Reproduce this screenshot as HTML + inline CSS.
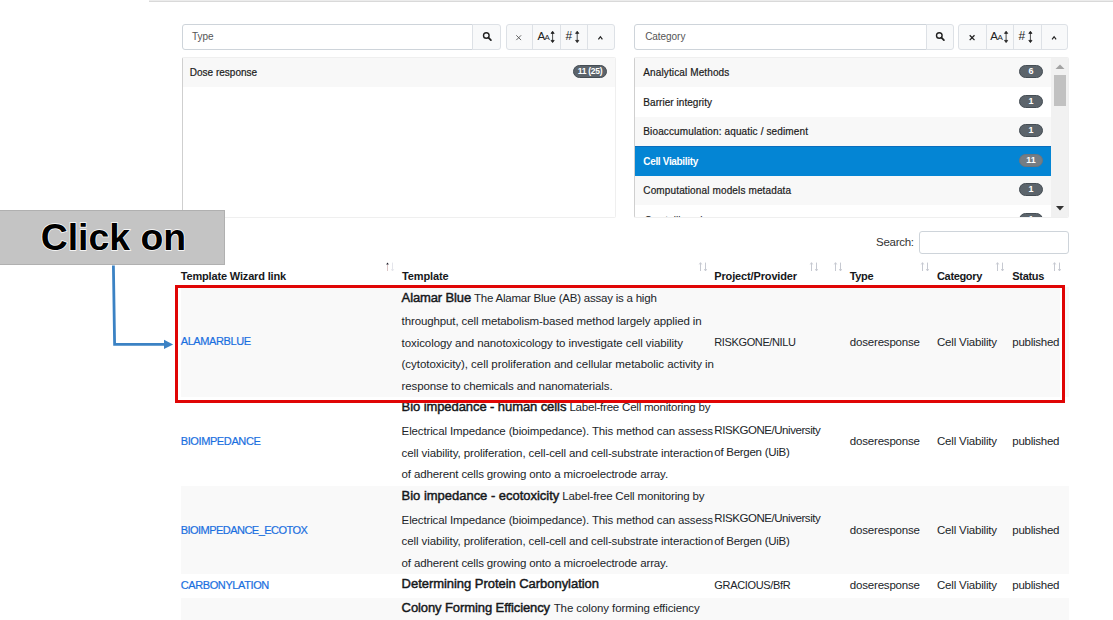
<!DOCTYPE html>
<html><head><meta charset="utf-8">
<style>
html,body{margin:0;padding:0;}
body{width:1113px;height:620px;overflow:hidden;background:#fff;position:relative;font-family:"Liberation Sans",sans-serif;color:#212529;}
.abs{position:absolute;}
.topline{left:149px;top:0;width:964px;height:2px;background:linear-gradient(#ececec 0,#ececec 50%,#d9d9d9 50%,#d9d9d9 100%);}
.inp{border:1px solid #ced4da;border-radius:3px;background:#fff;box-sizing:border-box;height:26px;top:24px;}
.btn{box-sizing:border-box;border:1px solid #dde1e6;background:#f8f9fa;height:26px;top:24px;}
.btn i{position:absolute;top:0;bottom:0;width:1px;background:#dde1e6;}
.list{box-sizing:border-box;border:1px solid #efefef;border-left-color:#cfcfcf;border-radius:2px;background:#fff;top:57px;height:161px;overflow:hidden;}
.li{position:absolute;left:0;right:0;height:30px;}
.li.odd{background:#f8f8f8;}
.li.sel{background:#0485d4;}
.bdg{position:absolute;background:#5c646b;border:1px solid #454d54;box-sizing:border-box;color:#fff;font-weight:bold;font-size:9px;border-radius:7px;height:13px;line-height:11px;text-align:center;}
.tx{position:absolute;white-space:pre;line-height:0;height:0;}
.row{position:absolute;left:180px;width:889px;}
.g{background:#f9f9f9;}
.srt{position:absolute;font-size:9px;line-height:9px;color:#c8c8c8;letter-spacing:-1.5px;white-space:nowrap;}
.srt b{font-weight:normal;color:#c8c8c8;}
.srt.a b{color:#555;}
</style></head><body>
<div class="abs topline"></div>

<!-- Type filter -->
<div class="abs inp" style="left:182px;width:291px;border-radius:3px 0 0 3px;"></div>
<div class="abs btn" style="left:472px;width:29px;border-radius:0 3px 3px 0;"></div>
<div class="abs btn" style="left:506px;width:109px;border-radius:3px;"><i style="left:25px"></i><i style="left:52.5px"></i><i style="left:80px"></i></div>
<div class="abs list" style="left:182px;width:434px;">
  <div class="li odd" style="top:0;height:29px"></div>
</div>
<div class="bdg" style="left:573px;top:64.5px;width:34px;font-size:8.5px;letter-spacing:-0.3px">11 (25)</div>

<!-- Category filter -->
<div class="abs inp" style="left:634px;width:293px;border-radius:3px 0 0 3px;"></div>
<div class="abs btn" style="left:926px;width:28px;border-radius:0 3px 3px 0;"></div>
<div class="abs btn" style="left:958px;width:110px;border-radius:3px;"><i style="left:27px"></i><i style="left:54px"></i><i style="left:82px"></i></div>
<div class="abs list" style="left:634px;width:435px;">
  <div class="li odd" style="top:0;height:29px"></div>
  <div class="li" style="top:29px;"></div>
  <div class="li odd" style="top:59px;height:30px"></div>
  <div class="li sel" style="top:88px;height:30.5px;box-sizing:border-box;border-top:1px solid #0a6ebd;border-bottom:1px solid #0a6ebd"></div>
  <div class="li odd" style="top:118px;height:29px"></div>
  <div class="abs" style="left:416px;top:0;width:18px;height:161px;background:#f1f1f1;"></div>
  <div class="abs" style="left:419px;top:17px;width:12px;height:31px;background:#c1c1c1;"></div>
</div>
<div class="bdg" style="left:1019px;top:65px;width:24px;">6</div>
<div class="bdg" style="left:1019px;top:95px;width:24px;">1</div>
<div class="bdg" style="left:1019px;top:124px;width:24px;">1</div>
<div class="bdg" style="left:1019px;top:154px;width:24px;background:#757d84;border-color:#6c757d;">11</div>
<div class="bdg" style="left:1019px;top:183px;width:24px;">1</div>
<div class="abs" style="left:1019px;top:213px;width:24px;height:4px;overflow:hidden;"><div class="bdg" style="left:0;top:0;width:24px;">1</div></div>
<svg class="abs" style="left:1051px;top:57px" width="18" height="161" viewBox="0 0 18 161">
  <path d="M4.5 12 L9 7.5 L13.5 12 Z" fill="#a3a3a3"/>
  <path d="M5 149 L13 149 L9 153.5 Z" fill="#333"/>
</svg>

<svg class="abs" style="left:506px;top:24px" width="110" height="26" viewBox="0 0 110 26" font-family="Liberation Sans, sans-serif">
  <path d="M10.3 11.3 l4.8 4.8 M15.1 11.3 l-4.8 4.8" stroke="#555" stroke-width="0.9" fill="none"/>
  <text x="31.4" y="16" font-size="11.5" fill="#222" letter-spacing="-0.8">A</text><text x="38.6" y="16" font-size="8" fill="#222">A</text>
  <path d="M46.6 9 v8 M46.6 7.2 l-1.6 2.2 h3.2 z M46.6 18.6 l-1.6 -2.2 h3.2 z" stroke="#222" stroke-width="0.8" fill="#222"/>
  <text x="59.6" y="16" font-size="12" fill="#222">#</text>
  <path d="M71.2 9 v8 M71.2 7.2 l-1.6 2.2 h3.2 z M71.2 18.6 l-1.6 -2.2 h3.2 z" stroke="#222" stroke-width="0.8" fill="#222"/>
  <path d="M92.4 15.4 l2 -2.7 l2 2.7" stroke="#222" stroke-width="1.2" fill="none"/>
</svg>
<svg class="abs" style="left:473px;top:24px" width="28" height="26" viewBox="0 0 28 26">
  <circle cx="13.3" cy="11.5" r="2.8" fill="none" stroke="#222" stroke-width="1.4"/>
  <path d="M15.4 13.6 L17.9 16.1" stroke="#222" stroke-width="1.8" stroke-linecap="round"/>
</svg>
<svg class="abs" style="left:958px;top:24px" width="110" height="26" viewBox="0 0 110 26" font-family="Liberation Sans, sans-serif">
  <path d="M11.7 11.3 l4.8 4.8 M16.5 11.3 l-4.8 4.8" stroke="#222" stroke-width="1.3" fill="none"/>
  <text x="32.2" y="16" font-size="11.5" fill="#222" letter-spacing="-0.8">A</text><text x="39.6" y="16" font-size="8" fill="#222">A</text>
  <path d="M48.1 9 v8 M48.1 7.2 l-1.6 2.2 h3.2 z M48.1 18.6 l-1.6 -2.2 h3.2 z" stroke="#222" stroke-width="0.8" fill="#222"/>
  <text x="60.5" y="16" font-size="12" fill="#222">#</text>
  <path d="M72.4 9 v8 M72.4 7.2 l-1.6 2.2 h3.2 z M72.4 18.6 l-1.6 -2.2 h3.2 z" stroke="#222" stroke-width="0.8" fill="#222"/>
  <path d="M94.1 15.4 l2 -2.7 l2 2.7" stroke="#222" stroke-width="1.2" fill="none"/>
</svg>
<svg class="abs" style="left:926px;top:24px" width="28" height="26" viewBox="0 0 28 26">
  <circle cx="13.3" cy="11.5" r="2.8" fill="none" stroke="#222" stroke-width="1.4"/>
  <path d="M15.4 13.6 L17.9 16.1" stroke="#222" stroke-width="1.8" stroke-linecap="round"/>
</svg>
<!-- search box -->
<div class="abs" style="left:919px;top:231px;width:150px;height:23px;box-sizing:border-box;border:1px solid #ced4da;border-radius:3px;background:#fff;"></div>

<!-- rows -->
<div class="row g" style="top:287px;height:109.6px;left:181px;width:888px"></div>
<div class="abs" style="left:1060.3px;top:288px;width:2px;height:112px;background:#fff"></div>
<div class="row g" style="top:486.2px;height:87.6px;left:181px;width:888px"></div>
<div class="row g" style="top:597.6px;height:23px;left:181px;width:888px"></div>

<div class="tx" style="left:180.7px;top:276.25px;font-size:11px;font-weight:bold;color:#16181b;letter-spacing:-0.158px">Template Wizard link</div>
<div class="tx" style="left:402.0px;top:276.25px;font-size:11px;font-weight:bold;color:#16181b;letter-spacing:-0.126px">Template</div>
<div class="tx" style="left:714.3px;top:276.25px;font-size:11px;font-weight:bold;color:#16181b;letter-spacing:-0.146px">Project/Provider</div>
<div class="tx" style="left:849.8px;top:276.25px;font-size:11px;font-weight:bold;color:#16181b;letter-spacing:-0.353px">Type</div>
<div class="tx" style="left:937.0px;top:276.25px;font-size:11px;font-weight:bold;color:#16181b;letter-spacing:-0.341px">Category</div>
<div class="tx" style="left:1012.3px;top:276.25px;font-size:11px;font-weight:bold;color:#16181b;letter-spacing:-0.325px">Status</div>
<div class="tx" style="left:876.1px;top:242.25px;font-size:11.5px;font-weight:normal;color:#333;letter-spacing:-0.290px">Search:</div>
<div class="tx" style="left:401.6px;top:298.25px;font-size:13px;font-weight:normal;-webkit-text-stroke:0.45px #16181b;color:#16181b;letter-spacing:-0.121px">Alamar Blue</div>
<div class="tx" style="left:474.0px;top:298.25px;font-size:11.5px;font-weight:normal;color:#212529;letter-spacing:-0.220px">The Alamar Blue (AB) assay is a high</div>
<div class="tx" style="left:401.6px;top:321.25px;font-size:11.5px;font-weight:normal;color:#212529;letter-spacing:-0.118px">throughput, cell metabolism-based method largely applied in</div>
<div class="tx" style="left:401.6px;top:343.25px;font-size:11.5px;font-weight:normal;color:#212529;letter-spacing:-0.077px">toxicology and nanotoxicology to investigate cell viability</div>
<div class="tx" style="left:401.6px;top:364.25px;font-size:11.5px;font-weight:normal;color:#212529;letter-spacing:-0.049px">(cytotoxicity), cell proliferation and cellular metabolic activity in</div>
<div class="tx" style="left:401.6px;top:386.25px;font-size:11.5px;font-weight:normal;color:#212529;letter-spacing:-0.114px">response to chemicals and nanomaterials.</div>
<div class="tx" style="left:180.7px;top:341.25px;font-size:11px;font-weight:normal;-webkit-text-stroke:0.2px #1a6fe0;color:#1a6fe0;letter-spacing:-0.387px">ALAMARBLUE</div>
<div class="tx" style="left:714.3px;top:342.26px;font-size:11px;font-weight:normal;color:#212529;letter-spacing:-0.374px">RISKGONE/NILU</div>
<div class="tx" style="left:849.8px;top:342.26px;font-size:11.5px;font-weight:normal;color:#212529;letter-spacing:-0.186px">doseresponse</div>
<div class="tx" style="left:937.0px;top:342.26px;font-size:11.5px;font-weight:normal;color:#212529;letter-spacing:-0.180px">Cell Viability</div>
<div class="tx" style="left:1012.3px;top:342.26px;font-size:11.5px;font-weight:normal;color:#212529;letter-spacing:-0.254px">published</div>
<div class="tx" style="left:401.6px;top:407.26px;font-size:13px;font-weight:normal;-webkit-text-stroke:0.45px #16181b;color:#16181b;letter-spacing:-0.082px">Bio impedance - human cells</div>
<div class="tx" style="left:569.4px;top:407.25px;font-size:11.5px;font-weight:normal;color:#212529;letter-spacing:-0.212px">Label-free Cell monitoring by</div>
<div class="tx" style="left:401.6px;top:431.25px;font-size:11.5px;font-weight:normal;color:#212529;letter-spacing:-0.136px">Electrical Impedance (bioimpedance). This method can assess</div>
<div class="tx" style="left:401.6px;top:453.26px;font-size:11.5px;font-weight:normal;color:#212529;letter-spacing:-0.103px">cell viability, proliferation, cell-cell and cell-substrate interaction</div>
<div class="tx" style="left:401.6px;top:474.25px;font-size:11.5px;font-weight:normal;color:#212529;letter-spacing:-0.130px">of adherent cells growing onto a microelectrode array.</div>
<div class="tx" style="left:401.6px;top:496.25px;font-size:13px;font-weight:normal;-webkit-text-stroke:0.45px #16181b;color:#16181b;letter-spacing:-0.021px">Bio impedance - ecotoxicity</div>
<div class="tx" style="left:562.3px;top:496.26px;font-size:11.5px;font-weight:normal;color:#212529;letter-spacing:-0.173px">Label-free Cell monitoring by</div>
<div class="tx" style="left:401.6px;top:520.25px;font-size:11.5px;font-weight:normal;color:#212529;letter-spacing:-0.136px">Electrical Impedance (bioimpedance). This method can assess</div>
<div class="tx" style="left:401.6px;top:541.25px;font-size:11.5px;font-weight:normal;color:#212529;letter-spacing:-0.103px">cell viability, proliferation, cell-cell and cell-substrate interaction</div>
<div class="tx" style="left:401.6px;top:563.26px;font-size:11.5px;font-weight:normal;color:#212529;letter-spacing:-0.130px">of adherent cells growing onto a microelectrode array.</div>
<div class="tx" style="left:401.6px;top:584.25px;font-size:13px;font-weight:normal;-webkit-text-stroke:0.45px #16181b;color:#16181b;letter-spacing:-0.041px">Determining Protein Carbonylation</div>
<div class="tx" style="left:401.6px;top:608.25px;font-size:13px;font-weight:normal;-webkit-text-stroke:0.45px #16181b;color:#16181b;letter-spacing:-0.094px">Colony Forming Efficiency</div>
<div class="tx" style="left:553.7px;top:608.25px;font-size:11.5px;font-weight:normal;color:#212529;letter-spacing:-0.094px">The colony forming efficiency</div>
<div class="tx" style="left:849.8px;top:441.25px;font-size:11.5px;font-weight:normal;color:#212529;letter-spacing:-0.186px">doseresponse</div>
<div class="tx" style="left:937.0px;top:441.25px;font-size:11.5px;font-weight:normal;color:#212529;letter-spacing:-0.180px">Cell Viability</div>
<div class="tx" style="left:1012.3px;top:441.25px;font-size:11.5px;font-weight:normal;color:#212529;letter-spacing:-0.254px">published</div>
<div class="tx" style="left:849.8px;top:530.25px;font-size:11.5px;font-weight:normal;color:#212529;letter-spacing:-0.186px">doseresponse</div>
<div class="tx" style="left:937.0px;top:530.25px;font-size:11.5px;font-weight:normal;color:#212529;letter-spacing:-0.180px">Cell Viability</div>
<div class="tx" style="left:1012.3px;top:530.25px;font-size:11.5px;font-weight:normal;color:#212529;letter-spacing:-0.254px">published</div>
<div class="tx" style="left:849.8px;top:585.26px;font-size:11.5px;font-weight:normal;color:#212529;letter-spacing:-0.186px">doseresponse</div>
<div class="tx" style="left:937.0px;top:585.26px;font-size:11.5px;font-weight:normal;color:#212529;letter-spacing:-0.180px">Cell Viability</div>
<div class="tx" style="left:1012.3px;top:585.26px;font-size:11.5px;font-weight:normal;color:#212529;letter-spacing:-0.254px">published</div>
<div class="tx" style="left:180.7px;top:441.25px;font-size:11px;font-weight:normal;-webkit-text-stroke:0.2px #1a6fe0;color:#1a6fe0;letter-spacing:-0.387px">BIOIMPEDANCE</div>
<div class="tx" style="left:180.7px;top:530.25px;font-size:11px;font-weight:normal;-webkit-text-stroke:0.2px #1a6fe0;color:#1a6fe0;letter-spacing:-0.534px">BIOIMPEDANCE_ECOTOX</div>
<div class="tx" style="left:180.7px;top:585.26px;font-size:11px;font-weight:normal;-webkit-text-stroke:0.2px #1a6fe0;color:#1a6fe0;letter-spacing:-0.393px">CARBONYLATION</div>
<div class="tx" style="left:714.3px;top:430.25px;font-size:11.5px;font-weight:normal;color:#212529;letter-spacing:-0.438px">RISKGONE/University</div>
<div class="tx" style="left:714.3px;top:452.25px;font-size:11.5px;font-weight:normal;color:#212529;letter-spacing:-0.269px">of Bergen (UiB)</div>
<div class="tx" style="left:714.3px;top:518.25px;font-size:11.5px;font-weight:normal;color:#212529;letter-spacing:-0.438px">RISKGONE/University</div>
<div class="tx" style="left:714.3px;top:541.25px;font-size:11.5px;font-weight:normal;color:#212529;letter-spacing:-0.269px">of Bergen (UiB)</div>
<div class="tx" style="left:714.3px;top:585.26px;font-size:11px;font-weight:normal;color:#212529;letter-spacing:-0.325px">GRACIOUS/BfR</div>
<div class="tx" style="left:192.1px;top:37.27px;font-size:10px;font-weight:normal;color:#555;letter-spacing:-0.096px">Type</div>
<div class="tx" style="left:645.2px;top:37.27px;font-size:10px;font-weight:normal;color:#555;letter-spacing:-0.054px">Category</div>
<div class="tx" style="left:189.8px;top:73.26px;font-size:10px;font-weight:normal;-webkit-text-stroke:0.2px #1b1b1b;color:#1b1b1b;letter-spacing:0.003px">Dose response</div>
<div class="tx" style="left:643.3px;top:73.26px;font-size:10px;font-weight:normal;-webkit-text-stroke:0.2px #1b1b1b;color:#1b1b1b;letter-spacing:0.121px">Analytical Methods</div>
<div class="tx" style="left:643.3px;top:103.26px;font-size:10px;font-weight:normal;-webkit-text-stroke:0.2px #1b1b1b;color:#1b1b1b;letter-spacing:0.055px">Barrier integrity</div>
<div class="tx" style="left:643.3px;top:132.26px;font-size:10px;font-weight:normal;-webkit-text-stroke:0.2px #1b1b1b;color:#1b1b1b;letter-spacing:0.135px">Bioaccumulation: aquatic / sediment</div>
<div class="tx" style="left:643.3px;top:162.26px;font-size:10px;font-weight:bold;color:#fff;letter-spacing:-0.331px">Cell Viability</div>
<div class="tx" style="left:643.3px;top:191.27px;font-size:10px;font-weight:normal;-webkit-text-stroke:0.2px #1b1b1b;color:#1b1b1b;letter-spacing:0.136px">Computational models metadata</div>
<div class="abs" style="left:640px;top:212px;width:300px;height:5px;overflow:hidden;"><div class="tx" style="left:4.5px;top:8.9px;font-size:10px;color:#1b1b1b;letter-spacing:0.05px">Crystalline phase</div></div>

<!-- sort icons -->
<svg class="abs" style="left:384px;top:261px" width="12" height="11" viewBox="0 0 12 11"><path d="M3.5 10 V3.5" stroke="#dcc6c6" stroke-width="1" fill="none"/><path d="M3.5 1.5 L4.8 3.6 H2.2 Z" fill="#1c1c28"/><path d="M8.5 1.6 V9.6 M7.3 8.3 L8.5 9.9 L9.7 8.3" stroke="#e4e5eb" stroke-width="1" fill="none"/></svg>
<svg class="abs" style="left:697px;top:261px" width="12" height="11" viewBox="0 0 12 11"><path d="M3.5 10 V1.8 M2.3 3.4 L3.5 1.7 L4.7 3.4" stroke="#c6c9d1" stroke-width="1" fill="none"/><path d="M8.5 1.6 V9.8 M7.3 8.2 L8.5 9.9 L9.7 8.2" stroke="#c6c9d1" stroke-width="1" fill="none"/></svg>
<svg class="abs" style="left:808px;top:261px" width="12" height="11" viewBox="0 0 12 11"><path d="M3.5 10 V1.8 M2.3 3.4 L3.5 1.7 L4.7 3.4" stroke="#c6c9d1" stroke-width="1" fill="none"/><path d="M8.5 1.6 V9.8 M7.3 8.2 L8.5 9.9 L9.7 8.2" stroke="#c6c9d1" stroke-width="1" fill="none"/></svg>
<svg class="abs" style="left:832px;top:261px" width="12" height="11" viewBox="0 0 12 11"><path d="M3.5 10 V1.8 M2.3 3.4 L3.5 1.7 L4.7 3.4" stroke="#c6c9d1" stroke-width="1" fill="none"/><path d="M8.5 1.6 V9.8 M7.3 8.2 L8.5 9.9 L9.7 8.2" stroke="#c6c9d1" stroke-width="1" fill="none"/></svg>
<svg class="abs" style="left:919px;top:261px" width="12" height="11" viewBox="0 0 12 11"><path d="M3.5 10 V1.8 M2.3 3.4 L3.5 1.7 L4.7 3.4" stroke="#c6c9d1" stroke-width="1" fill="none"/><path d="M8.5 1.6 V9.8 M7.3 8.2 L8.5 9.9 L9.7 8.2" stroke="#c6c9d1" stroke-width="1" fill="none"/></svg>
<svg class="abs" style="left:994px;top:261px" width="12" height="11" viewBox="0 0 12 11"><path d="M3.5 10 V1.8 M2.3 3.4 L3.5 1.7 L4.7 3.4" stroke="#c6c9d1" stroke-width="1" fill="none"/><path d="M8.5 1.6 V9.8 M7.3 8.2 L8.5 9.9 L9.7 8.2" stroke="#c6c9d1" stroke-width="1" fill="none"/></svg>
<svg class="abs" style="left:1051px;top:261px" width="12" height="11" viewBox="0 0 12 11"><path d="M3.5 10 V1.8 M2.3 3.4 L3.5 1.7 L4.7 3.4" stroke="#c6c9d1" stroke-width="1" fill="none"/><path d="M8.5 1.6 V9.8 M7.3 8.2 L8.5 9.9 L9.7 8.2" stroke="#c6c9d1" stroke-width="1" fill="none"/></svg>
<!-- red box -->
<div class="abs" style="left:175px;top:285px;width:890px;height:118px;box-sizing:border-box;border:3px solid #e00505;"></div>

<!-- callout -->
<div class="abs" style="left:0;top:210px;width:225px;height:55px;background:#c4c4c4;box-sizing:border-box;border:1px solid #b0b0b0;border-left:0;"></div>
<div class="tx" style="left:40.7px;top:237px;font-size:37.4px;font-weight:bold;color:#000;-webkit-text-stroke:1.4px #fff;paint-order:stroke fill;">Click on</div>
<svg class="abs" style="left:100px;top:260px" width="80" height="95" viewBox="100 260 80 95">
  <path d="M113.4 265.5 L114.6 344.3 L165 344.3" fill="none" stroke="#3b82c4" stroke-width="2.8" stroke-linejoin="miter"/>
  <path d="M164 339.8 L173.1 344.4 L164 349 Z" fill="#3b82c4"/>
</svg>
</body></html>
